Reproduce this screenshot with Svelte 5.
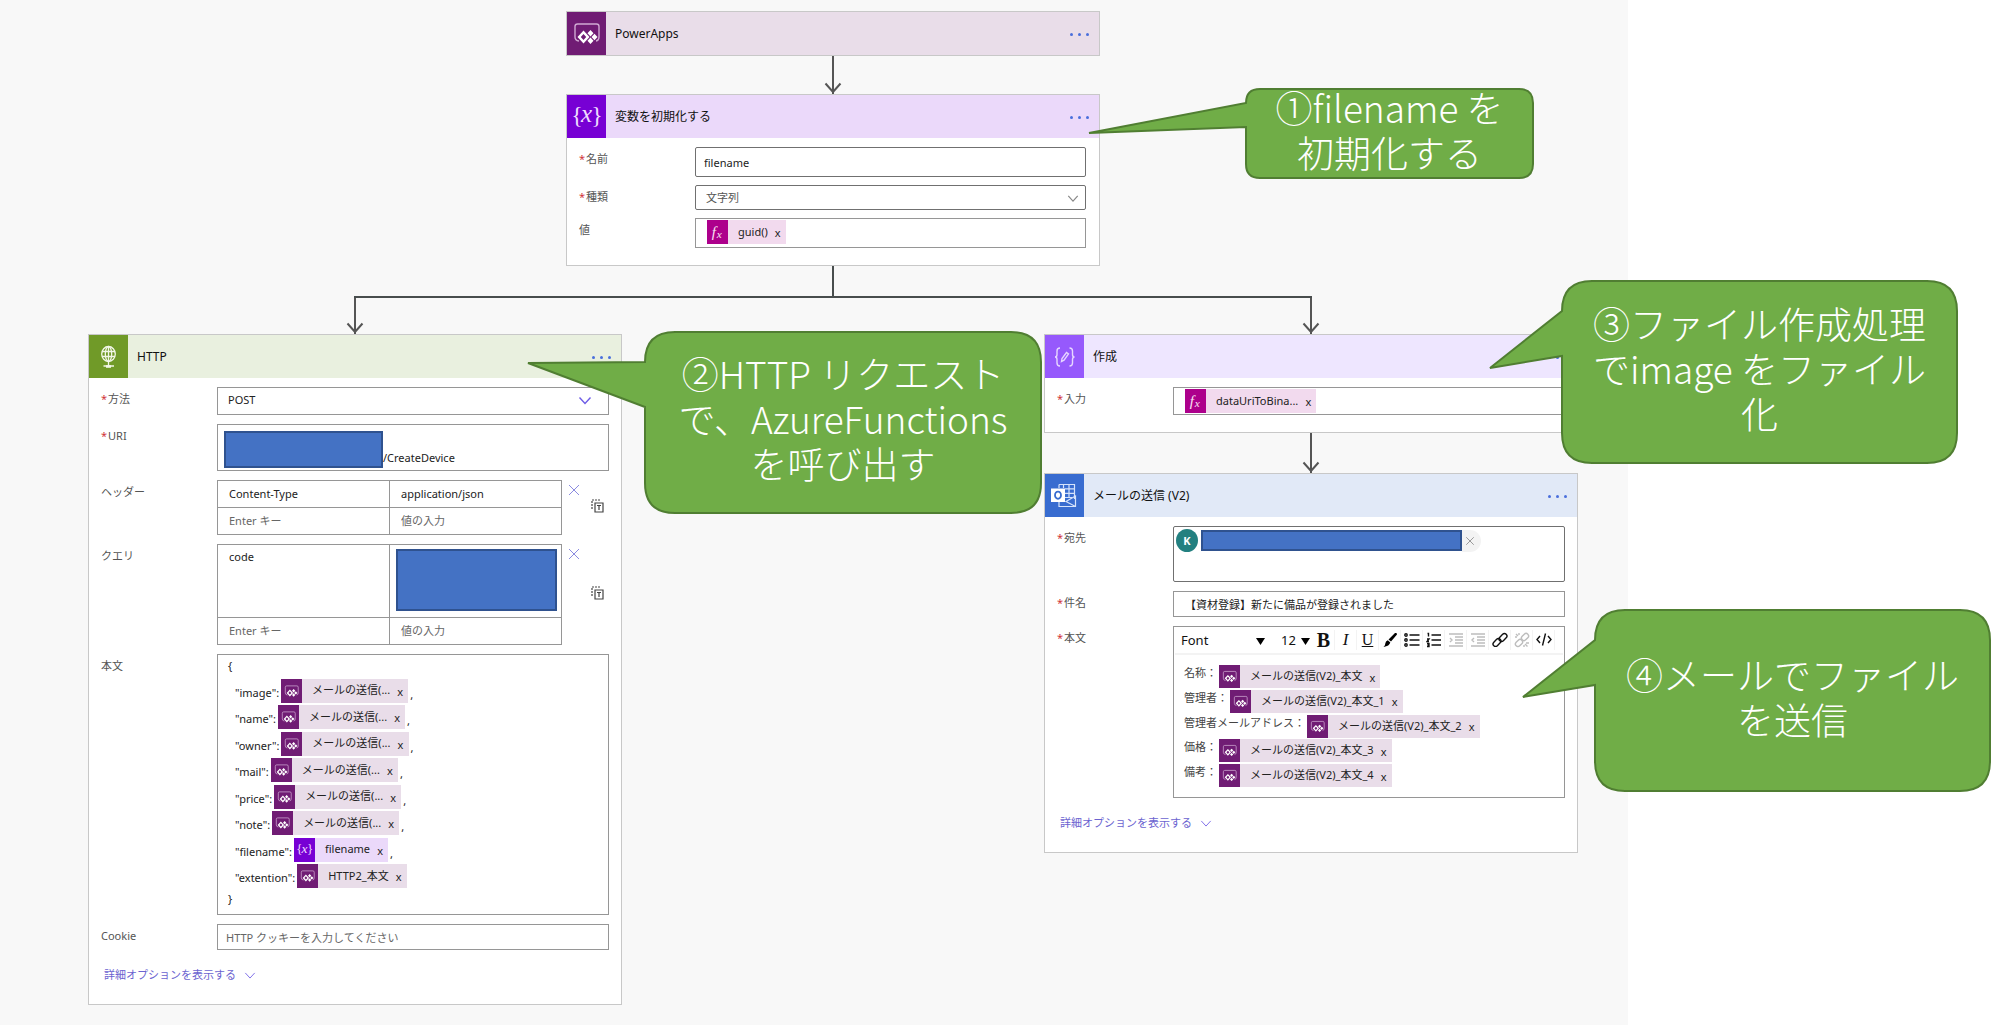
<script>
  const bodyRows = [
    { key: '"image":', icon: 'apps', text: 'メールの送信(...', comma: true },
    { key: '"name":', icon: 'apps', text: 'メールの送信(...', comma: true },
    { key: '"owner":', icon: 'apps', text: 'メールの送信(...', comma: true },
    { key: '"mail":', icon: 'apps', text: 'メールの送信(...', comma: true },
    { key: '"price":', icon: 'apps', text: 'メールの送信(...', comma: true },
    { key: '"note":', icon: 'apps', text: 'メールの送信(...', comma: true },
    { key: '"filename":', icon: 'variable', text: 'filename', comma: true },
    { key: '"extention":', icon: 'apps', text: 'HTTP2_本文', comma: false }
  ];

  const mailRows = [
    { key: '名称：', text: 'メールの送信(V2)_本文' },
    { key: '管理者：', text: 'メールの送信(V2)_本文_1' },
    { key: '管理者メールアドレス：', text: 'メールの送信(V2)_本文_2' },
    { key: '価格：', text: 'メールの送信(V2)_本文_3' },
    { key: '備考：', text: 'メールの送信(V2)_本文_4' }
  ];

  let filename = $state('filename');
  let subject = $state('【資材登録】新たに備品が登録されました');
</script>

{#snippet glyph(name)}
  <svg class="glyph" viewBox="0 0 39 43" aria-hidden="true">
    {#if name === 'apps'}
      <path d="M12 29 Q8 28.500 8 25 V14.500 Q8 12 10.500 12 H29.500 Q32 12 32 14.500 V25 Q32 28.500 29 29" fill="none" stroke="#cfa9d2" stroke-width="1.400" />
      <path d="M16.500 18.500 L22.500 25 L16.500 31.500 L10.500 25 Z M16.500 22 L13.800 25 L16.500 28 L19.200 25 Z" fill="#fff" fill-rule="evenodd" />
      <path d="M23.500 18 l3 3.200 -3 3.200 -3 -3.200z M27.500 21.800 l3 3.200 -3 3.200 -3 -3.200z M23.500 25.600 l3 3.200 -3 3.200 -3 -3.200z" fill="#fff" />
    {:else if name === 'variable'}
      <g fill="#efdcff" font-family="'Liberation Serif', serif" text-anchor="middle">
        <text x="10" y="28" font-size="24">{'{'}</text>
        <text x="19.500" y="27" font-size="25" font-style="italic">x</text>
        <text x="30" y="28" font-size="24">{'}'}</text>
      </g>
    {:else if name === 'fx'}
      <g fill="#fbe3f4" font-family="'Liberation Serif', serif" font-style="italic">
        <text x="9" y="30" font-size="28">f</text>
        <text x="18" y="33" font-size="21">x</text>
      </g>
    {:else if name === 'globe'}
      <g fill="none" stroke="#f1f6e6" stroke-width="1.300">
        <ellipse cx="19.500" cy="19" rx="6.800" ry="7.500" />
        <ellipse cx="19.500" cy="19" rx="3.200" ry="7.500" />
        <path d="M19.500 11.500 V31 M13 16.500 H26 M13 21.500 H26 M14.500 31 H25" />
        <path d="M17 31.500 H22" stroke-width="2.600" />
      </g>
    {:else if name === 'compose'}
      <g fill="none" stroke="#e6d6ff" stroke-width="1.400">
        <path d="M15 13 Q12 13 12 16 V19.500 Q12 22 10 22 Q12 22 12 24.500 V28 Q12 31 15 31" />
        <path d="M24.500 13 Q27.500 13 27.500 16 V19.500 Q27.500 22 29.500 22 Q27.500 22 27.500 24.500 V28 Q27.500 31 24.500 31" />
        <path d="M16.500 26.500 L17 23.500 L21.500 17.500 L23.500 19 L19 25.200 Z" />
      </g>
    {:else if name === 'mail'}
      <g fill="none" stroke="#d5e3fb" stroke-width="1.200">
        <path d="M14 10.500 H29.500 V25 M14 10.500 V14 M18.500 10.500 V14 M24 10.500 V23 M20 14.800 H29.500 M20 19.300 H29.500 M20 23.500 H27" />
        <path d="M14 28 V32.500 H30.500 V22 L21 27.500 L30.500 32.500" />
      </g>
      <rect x="6" y="14.500" width="14" height="13.500" fill="#fff" />
      <ellipse cx="13" cy="21.200" rx="3" ry="3.600" fill="none" stroke="#386cd0" stroke-width="1.800" />
    {/if}
  </svg>
{/snippet}

{#snippet head(icon, title)}
  <header class="head {icon}">
    <span class="tile">{@render glyph(icon)}</span>
    <h2>{title}</h2>
    <button class="dots" aria-label="{title} のメニュー"><i></i><i></i><i></i></button>
  </header>
{/snippet}

{#snippet token(icon, text)}
  <span class="token {icon}">
    <span class="tile">{@render glyph(icon)}</span>
    <span class="token-text">{text}</span>
    <button class="remove" aria-label="{text} を削除">x</button>
  </span>
{/snippet}

{#snippet arrow()}
  <div class="arrow">
    <svg viewBox="0 0 18 12" aria-hidden="true"><path d="M1.500 1.500 L9 10 L16.500 1.500" /></svg>
  </div>
{/snippet}

{#snippet chevron()}
  <svg class="chevron" viewBox="0 0 14 9" aria-hidden="true"><path d="M1.500 1.500 L7 7.500 L12.500 1.500" /></svg>
{/snippet}

{#snippet more()}
  <button class="more">詳細オプションを表示する {@render chevron()}</button>
{/snippet}

{#snippet tableTools()}
  <div class="tools">
    <button class="clear" aria-label="行を削除">
      <svg viewBox="0 0 12 12" aria-hidden="true"><path d="M1 1 L11 11 M11 1 L1 11" /></svg>
    </button>
    <button class="switch" aria-label="テキスト モードに切り替える">
      <svg viewBox="0 0 13 14" aria-hidden="true">
        <path d="M1 10 V1 H9" stroke-dasharray="2 1" />
        <path d="M4 4 H12 V13 H4 Z M6 6.500 H10 M8 6.500 V11" />
      </svg>
    </button>
  </div>
{/snippet}

<main class="page">
  <div class="canvas">
    <section class="card">
      {@render head('apps', 'PowerApps')}
    </section>
    {@render arrow()}

    <section class="card">
      {@render head('variable', '変数を初期化する')}
      <div class="form tight">
        <label for="var-name"><b>*</b>名前</label>
        <input id="var-name" class="field dark h30" bind:value={filename} />
        <label for="var-type"><b>*</b>種類</label>
        <div class="pick muted">
          <select id="var-type" class="field dark h25"><option>文字列</option></select>
          {@render chevron()}
        </div>
        <span class="label">値</span>
        <div class="field h30 tokens">{@render token('fx', 'guid()')}</div>
      </div>
      <aside class="callout one">
        <svg viewBox="0 0 446 91" aria-hidden="true">
          <path d="M172 1 H431 Q445 1 445 15 V76 Q445 90 431 90 H172 Q158 90 158 76 V39 L1 45 L158 15 Q158 1 172 1 Z" />
        </svg>
        <p>①filename を<br />初期化する</p>
      </aside>
    </section>

    <div class="split">
      <div class="stem"></div>
      <div class="bar">{@render arrow()}{@render arrow()}</div>
    </div>

    <div class="branches">
      <section class="card">
        {@render head('globe', 'HTTP')}
        <div class="form">
          <label for="method"><b>*</b>方法</label>
          <div class="pick">
            <select id="method" class="field h28"><option>POST</option></select>
            {@render chevron()}
          </div>

          <span class="label"><b>*</b>URI</span>
          <div class="field uri">
            <span class="redacted"></span>
            <span>/CreateDevice</span>
          </div>

          <span class="label">ヘッダー</span>
          <div class="pairs">
            <table>
              <tbody>
                <tr><td>Content-Type</td><td>application/json</td></tr>
                <tr>
                  <td><input aria-label="ヘッダー キー" placeholder="Enter キー" /></td>
                  <td><input aria-label="ヘッダー 値" placeholder="値の入力" /></td>
                </tr>
              </tbody>
            </table>
            {@render tableTools()}
          </div>

          <span class="label">クエリ</span>
          <div class="pairs">
            <table>
              <tbody>
                <tr class="tall"><td>code</td><td class="filled"><span class="redacted"></span></td></tr>
                <tr>
                  <td><input aria-label="クエリ キー" placeholder="Enter キー" /></td>
                  <td><input aria-label="クエリ 値" placeholder="値の入力" /></td>
                </tr>
              </tbody>
            </table>
            {@render tableTools()}
          </div>

          <span class="label">本文</span>
          <div class="field json">
            <div class="open">{'{'}</div>
            {#each bodyRows as row}
              <div class="line">
                <span class="key">{row.key}</span>
                {@render token(row.icon, row.text)}
                {#if row.comma}<span class="comma">,</span>{/if}
              </div>
            {/each}
            <div class="close">{'}'}</div>
          </div>

          <label for="cookie">Cookie</label>
          <input id="cookie" class="field h26" placeholder="HTTP クッキーを入力してください" />
        </div>
        {@render more()}
        <aside class="callout two">
          <svg viewBox="0 0 515 183" aria-hidden="true">
            <path d="M148 1 H484 Q514 1 514 31 V152 Q514 182 484 182 H148 Q118 182 118 152 V76 L1 32 L118 31 Q118 1 148 1 Z" />
          </svg>
          <p>②HTTP リクエスト<br />で、AzureFunctions<br />を呼び出す</p>
        </aside>
      </section>

      <div class="column">
        <section class="card">
          {@render head('compose', '作成')}
          <div class="form">
            <span class="label"><b>*</b>入力</span>
            <div class="field h28 tokens">{@render token('fx', 'dataUriToBina...')}</div>
          </div>
          <aside class="callout three">
            <svg viewBox="0 0 469 184" aria-hidden="true">
              <path d="M103 1 H438 Q468 1 468 31 V153 Q468 183 438 183 H103 Q73 183 73 153 V76 L1 88 L73 31 Q73 1 103 1 Z" />
            </svg>
            <p>③ファイル作成処理<br />でimage をファイル<br />化</p>
          </aside>
        </section>
        {@render arrow()}

        <section class="card">
          {@render head('mail', 'メールの送信 (V2)')}
          <div class="form">
            <span class="label"><b>*</b>宛先</span>
            <div class="field dark people">
              <span class="avatar">K</span>
              <span class="redacted"></span>
              <button class="drop" aria-label="宛先を削除">
                <svg viewBox="0 0 12 12" aria-hidden="true"><path d="M1.500 1.500 L10.500 10.500 M10.500 1.500 L1.500 10.500" /></svg>
              </button>
            </div>

            <label for="subject"><b>*</b>件名</label>
            <input id="subject" class="field subject h26" bind:value={subject} />

            <span class="label"><b>*</b>本文</span>
            <div class="field editor">
              <div class="toolbar">
                <span class="font-pick">
                  <select aria-label="フォント"><option>Font</option></select>
                  <svg class="caret" viewBox="0 0 9 7" aria-hidden="true"><path d="M0 0 H9 L4.500 7 Z" /></svg>
                </span>
                <span class="size-pick">
                  <select aria-label="サイズ"><option>12</option></select>
                  <svg class="caret" viewBox="0 0 9 7" aria-hidden="true"><path d="M0 0 H9 L4.500 7 Z" /></svg>
                </span>
                <button class="bold" aria-label="太字">B</button>
                <button class="italic" aria-label="斜体">I</button>
                <button class="under" aria-label="下線">U</button>
                <button aria-label="色">
                  <svg viewBox="0 0 16 16"><path d="M14.500 1 L15 2.500 L9 9.500 L6.500 7.500 L13 1 Z M5.800 8.300 L8.300 10.500 Q7.500 14 1.500 15 Q3.500 13 3.300 11.500 Q3.500 9 5.800 8.300 Z" /></svg>
                </button>
                <button aria-label="箇条書き">
                  <svg viewBox="0 0 16 16" class="stroke"><path d="M5.500 3 H15.500 M5.500 8 H15.500 M5.500 13 H15.500" /><circle cx="2" cy="3" r="1.200" /><circle cx="2" cy="8" r="1.200" /><circle cx="2" cy="13" r="1.200" /></svg>
                </button>
                <button aria-label="番号付きリスト">
                  <svg viewBox="0 0 16 16" class="stroke"><path d="M5.500 3 H15 M5.500 8 H15 M5.500 13 H15 M1.500 1.500 H2.500 V4.500 M1 7 H3 L1 9.500 H3 M1 11.500 H3 V14.500 H1 M1.500 13 H3" /></svg>
                </button>
                <button class="off" aria-label="インデント">
                  <svg viewBox="0 0 16 16" class="stroke"><path d="M1 2 H15 M7 5 H15 M7 8 H15 M7 11 H15 M1 14 H15 M2 6 L4 8 L2 10" /></svg>
                </button>
                <button class="off" aria-label="インデント解除">
                  <svg viewBox="0 0 16 16" class="stroke"><path d="M1 2 H15 M7 5 H15 M7 8 H15 M7 11 H15 M1 14 H15 M4 6 L2 8 L4 10" /></svg>
                </button>
                <button aria-label="リンク">
                  <svg viewBox="0 0 16 16" class="stroke"><rect x="6.500" y="3" width="9" height="5" rx="2.500" transform="rotate(-45 11 5.500)" /><rect x="0.500" y="8" width="9" height="5" rx="2.500" transform="rotate(-45 5 10.500)" /></svg>
                </button>
                <button class="off" aria-label="リンク解除">
                  <svg viewBox="0 0 16 16" class="stroke"><rect x="7" y="2.500" width="8" height="5" rx="2.500" transform="rotate(-45 11 5)" /><rect x="1" y="8.500" width="8" height="5" rx="2.500" transform="rotate(-45 5 11)" /><path d="M2 2 L4 4 M5 1 V3 M1 5 H3 M11 12 L13.500 14.500 M10 13 V15 M12 11 H15" /></svg>
                </button>
                <button aria-label="コード ビュー">
                  <svg viewBox="0 0 16 16" class="stroke"><path d="M4 4 L1 7.500 L4 11 M12 4 L15 7.500 L12 11 M9.500 1.500 L6.500 13.500" /></svg>
                </button>
              </div>
              <div class="content">
                {#each mailRows as row}
                  <div class="line">
                    <span class="key">{row.key}</span>
                    {@render token('apps', row.text)}
                  </div>
                {/each}
              </div>
            </div>
          </div>
          {@render more()}
          <aside class="callout four">
            <svg viewBox="0 0 469 183" aria-hidden="true">
              <path d="M103 1 H438 Q468 1 468 31 V152 Q468 182 438 182 H103 Q73 182 73 152 V76 L1 88 L73 31 Q73 1 103 1 Z" />
            </svg>
            <p>④メールでファイル<br />を送信</p>
          </aside>
        </section>
      </div>
    </div>
  </div>
</main>

<style>
  :global(body) {
    background: #fff;
  }

  .page {
    overflow: hidden;
    font: 11px/16px 'Noto Sans', 'Noto Sans CJK JP', sans-serif;
    color: #222;
  }

  input,
  select,
  button {
    font: inherit;
    color: inherit;
    margin: 0;
  }

  .page * {
    box-sizing: border-box;
  }

  button {
    border: 0;
    padding: 0;
    background: none;
    cursor: pointer;
  }

  .canvas {
    display: flex;
    flex-direction: column;
    align-items: center;
    width: 1628px;
    max-width: 100%;
    min-height: 100vh;
    padding: 11px 50px 10px 88px;
    background: #f8f8f8;
  }

  .card {
    position: relative;
    width: 534px;
    max-width: 100%;
    border: 1px solid #c8c8c8;
    background: #fff;
  }

  .head {
    display: flex;
    align-items: center;
    height: 43px;
  }

  .head .tile {
    width: 39px;
    height: 43px;
  }

  .glyph {
    display: block;
    width: 100%;
    height: 100%;
  }

  h2 {
    flex: 1;
    margin: 0 0 0 9px;
    font-size: 12px;
    font-weight: 400;
    color: #111;
  }

  .apps { background: #e9dde9; }
  .apps .tile { background: #701c74; }
  .variable { background: #ebd9fa; }
  .variable .tile { background: #7700d4; }
  .fx { background: #f2daee; }
  .fx .tile { background: #ad008c; }
  .globe { background: #e9f0df; }
  .globe .tile { background: #709a28; }
  .compose { background: #eee6ff; }
  .compose .tile { background: #9659fc; }
  .mail { background: #e1e9f7; }
  .mail .tile { background: #386cd0; }

  .dots {
    display: flex;
    gap: 5px;
    margin-right: 10px;
    padding: 4px 0 2px;
  }

  .dots i {
    width: 3px;
    height: 3px;
    border-radius: 50%;
    background: #4a6fdc;
  }

  .arrow {
    position: relative;
    width: 2px;
    height: 38px;
    background: #555;
  }

  .arrow svg {
    position: absolute;
    left: -8px;
    bottom: 0;
    width: 18px;
    height: 12px;
    fill: none;
    stroke: #555;
    stroke-width: 2;
  }

  .split {
    width: 100%;
    padding: 0 266px;
  }

  .stem {
    width: 2px;
    height: 30px;
    margin: 0 auto;
    background: #484d4d;
  }

  .bar {
    display: flex;
    justify-content: space-between;
    border-top: 2px solid #484d4d;
  }

  .bar .arrow {
    height: 36px;
  }

  .branches {
    display: grid;
    grid-template-columns: repeat(2, minmax(0, 534px));
    justify-content: space-between;
    align-items: start;
    width: 100%;
  }

  .column {
    display: flex;
    flex-direction: column;
    align-items: center;
  }

  .column .arrow {
    height: 40px;
  }

  .form {
    display: grid;
    grid-template-columns: 116px minmax(0, 1fr);
    gap: 9px 0;
    padding: 9px 12px 17px;
  }

  .form.tight {
    row-gap: 8px;
    padding-right: 13px;
  }

  label,
  .label {
    padding-top: 4px;
    color: #555;
  }

  b {
    display: inline-block;
    width: 7px;
    font-weight: 400;
    color: #d13438;
  }

  .field {
    width: 100%;
    border: 1px solid #969696;
    border-radius: 0;
    background: #fff;
    padding: 0 10px;
  }

  input.field {
    padding: 0 8px;
  }

  input.field.subject {
    padding: 0 11px;
  }

  input::placeholder {
    color: #666;
    opacity: 1;
  }

  .dark {
    border-color: #707070;
    border-radius: 2px;
  }

  .h25 { height: 25px; }
  .h26 { height: 26px; }
  .h28 { height: 28px; }
  .h30 { height: 30px; }

  .pick {
    position: relative;
    display: grid;
  }

  select {
    appearance: none;
  }

  #method {
    padding-bottom: 2px;
  }

  .chevron {
    width: 14px;
    height: 9px;
    fill: none;
    stroke: #6e5ce6;
    stroke-width: 1.4;
  }

  .pick .chevron {
    position: absolute;
    right: 17px;
    top: 9px;
    pointer-events: none;
  }

  .muted {
    color: #555;
  }

  .muted .chevron {
    right: 7px;
    width: 12px;
    stroke: #888;
  }

  .tokens {
    display: flex;
    align-items: flex-start;
    padding: 1px 11px;
  }

  .token {
    display: inline-flex;
    align-items: center;
    height: 24px;
    color: #222;
  }

  .token .tile {
    width: 21px;
    height: 24px;
  }

  .token-text {
    margin: 0 7px 0 10px;
    padding-bottom: 1px;
  }

  .remove {
    width: 6px;
    height: 20px;
    margin-right: 5px;
    line-height: 18px;
    padding-top: 2px;
  }

  .redacted {
    display: block;
    border: 2px solid #2f528f;
    background: #4472c4;
  }

  .uri {
    display: flex;
    align-items: flex-end;
    height: 47px;
    padding: 0 6px 2px;
  }

  .uri .redacted {
    width: 159px;
    height: 37px;
  }

  .uri span:last-child {
    padding-bottom: 2px;
  }

  .pairs {
    display: flex;
  }

  table {
    flex: 1;
    table-layout: fixed;
    border-collapse: collapse;
  }

  td {
    width: 50%;
    height: 27px;
    border: 1px solid #969696;
    padding: 0 11px;
    background: #fff;
  }

  td input {
    display: block;
    width: 100%;
    border: 0;
    padding: 0;
    background: none;
  }

  .tall td {
    height: 72px;
    padding-top: 4px;
    vertical-align: top;
  }

  .tall .filled {
    padding: 4px 4px 6px 6px;
    vertical-align: middle;
  }

  .filled .redacted {
    height: 62px;
  }

  .tools {
    display: flex;
    align-items: center;
    gap: 11px;
    width: 47px;
    padding-left: 6px;
  }

  .tools svg {
    display: block;
    width: 100%;
    fill: none;
  }

  .clear {
    align-self: flex-start;
    width: 12px;
    margin-top: 4px;
  }

  .clear svg {
    stroke: #8b8be0;
  }

  .switch {
    width: 13px;
    padding-bottom: 4px;
  }

  .switch svg {
    stroke: #444;
    stroke-width: 1.2;
  }

  .json {
    display: flex;
    flex-direction: column;
    justify-content: space-between;
    height: 261px;
    padding: 3px 10px 2px;
  }

  .open {
    height: 18px;
  }

  .close {
    height: 21px;
  }

  .line {
    display: flex;
    height: 24px;
  }

  .json .key {
    padding: 6px 2px 0 7px;
  }

  .comma {
    padding: 8px 0 0 2px;
  }

  .more {
    display: flex;
    align-items: center;
    gap: 8px;
    margin: 0 0 21px 15px;
    color: #6b63d0;
  }

  .more .chevron {
    width: 12px;
    stroke-width: 1;
  }

  .people {
    display: flex;
    height: 56px;
    padding: 2px;
  }

  .avatar {
    width: 22px;
    height: 23px;
    border-radius: 50%;
    background: #238080;
    color: #fff;
    font-weight: 700;
    line-height: 23px;
    text-align: center;
  }

  .people .redacted {
    width: 261px;
    height: 21px;
    margin: 1px 0 0 3px;
  }

  .drop {
    width: 19px;
    height: 22px;
    margin-top: 1px;
    border-radius: 0 11px 11px 0;
    background: #f3f3f3;
  }

  .drop svg {
    display: block;
    width: 10px;
    margin-left: 3px;
    stroke: #888;
  }

  .editor {
    height: 172px;
    padding: 0 1px;
  }

  .toolbar {
    display: flex;
    align-items: center;
    height: 28px;
    border-bottom: 2px solid #f3f3f3;
    color: #111;
  }

  .toolbar select {
    width: 100%;
    border: 0;
    padding: 0;
    background: none;
    font-size: 13px;
  }

  .font-pick,
  .size-pick {
    position: relative;
  }

  .font-pick {
    width: 101px;
    padding-left: 6px;
  }

  .size-pick {
    width: 37px;
    padding-left: 5px;
  }

  .caret {
    position: absolute;
    right: 11px;
    top: 6px;
    width: 9px;
    height: 7px;
    pointer-events: none;
  }

  .size-pick .caret {
    right: 3px;
  }

  .toolbar button {
    flex: 0 1 22px;
    height: 20px;
    border-right: 1px solid #f3f3f3;
    font-family: 'Liberation Serif', serif;
    font-size: 17px;
    line-height: 20px;
  }

  .toolbar button svg {
    display: block;
    width: 16px;
    height: 16px;
    margin: 0 auto;
  }

  .stroke {
    fill: none;
    stroke: currentColor;
    stroke-width: 1.4;
  }

  .toolbar .bold {
    font-weight: 700;
    font-size: 20px;
  }

  .toolbar .italic {
    font-style: italic;
  }

  .toolbar .under {
    font-size: 16px;
    text-decoration: underline;
  }

  .toolbar .off {
    color: #bdbdbd;
  }

  .content {
    display: flex;
    flex-direction: column;
    justify-content: space-between;
    height: 122px;
    margin: 10px 9px 0;
  }

  .content .line,
  .content .token,
  .content .tile {
    height: 23px;
  }

  .content .key {
    color: #444;
    padding-right: 2px;
  }

  .callout {
    position: absolute;
    z-index: 2;
    display: flex;
    align-items: center;
    justify-content: center;
    pointer-events: none;
  }

  .callout svg {
    position: absolute;
    inset: 0;
    width: 100%;
    height: 100%;
    fill: #70ad47;
    stroke: #507e32;
    stroke-width: 2;
  }

  .callout p {
    position: relative;
    margin: 0 0 8px;
    color: #fff;
    font: 300 37px/45px 'Noto Sans CJK JP', sans-serif;
    text-align: center;
    white-space: nowrap;
  }

  .one { left: 521px; top: -7px; width: 446px; height: 91px; padding-left: 157px; }
  .two { left: 438px; top: -4px; width: 515px; height: 183px; padding-left: 117px; }
  .three { left: 444px; top: -55px; width: 469px; height: 184px; padding-left: 72px; }
  .four { left: 477px; top: 135px; width: 469px; height: 183px; padding-left: 72px; }
</style>
